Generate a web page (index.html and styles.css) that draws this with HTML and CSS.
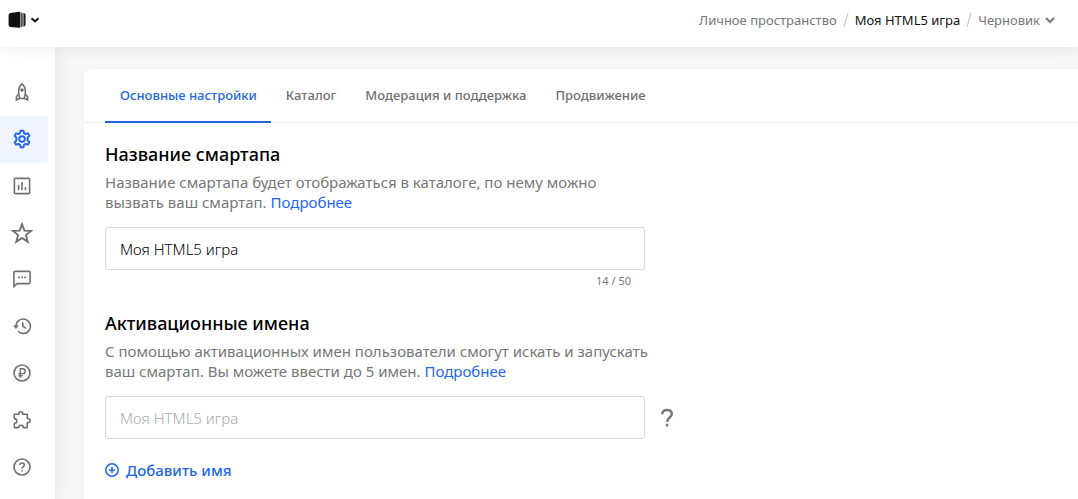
FILE: index.html
```html
<!DOCTYPE html>
<html lang="ru">
<head>
<meta charset="utf-8">
<meta name="viewport" content="width=device-width, initial-scale=1">
<title>Моя HTML5 игра</title>
<link rel="stylesheet" href="styles.css">
</head>
<body>
<header class="topbar">
  <button class="brand" type="button" aria-label="Меню продуктов">
    <svg class="brand-logo" viewBox="0 0 18 18"><path d="M.6 4.200Q.6 2.500 2.300 2.100L11 .7Q12.400.5 12.400 2V15.500Q12.400 17 11 16.800L2.300 15.900Q.6 15.600.6 14Z" fill="#111"/><path d="M12.900 1.200Q14.800 1.300 14.800 3V14.500Q14.800 16.200 12.900 16.400Z" fill="#555"/><path d="M15.400 1.800Q17.600 2.200 17.600 4V13.500Q17.600 15.200 15.400 15.800Z" fill="#222"/></svg>
    <svg class="chevron" viewBox="0 0 10 10"><path d="M1.500 3.200 5 6.400 8.500 3.200"/></svg>
  </button>
  <nav class="crumbs" aria-label="Навигация">
    <a href="#">Личное пространство</a>
    <svg class="slash" viewBox="0 0 6 16"><path d="M5 1 1 15"/></svg>
    <a class="crumb-current" href="#">Моя HTML5 игра</a>
    <svg class="slash" viewBox="0 0 6 16"><path d="M5 1 1 15"/></svg>
    <button class="crumb-menu" type="button">Черновик
      <svg class="chevron" viewBox="0 0 10 10"><path d="M1 3 5 7 9 3"/></svg>
    </button>
  </nav>
</header>
<div class="shell">
  <nav class="sidebar" aria-label="Разделы">
    <a href="#" aria-label="Запуск"><svg viewBox="0 0 20 20"><path d="M10 1.800C7.600 3.800 6.600 6.300 6.600 9.500c0 2.800.5 5.100 1.300 7h4.200c.8-1.900 1.300-4.200 1.300-7 0-3.200-1-5.700-3.400-7.700Z"/><path d="M6.700 12 4.400 14.800V18l3.300-1.700M13.300 12l2.300 2.800V18l-3.300-1.700"/><circle cx="10" cy="8" r="1" fill="currentColor"/></svg></a>
    <a class="active" href="#" aria-label="Настройки" aria-current="page"><svg viewBox="0 0 20 20"><path stroke-width="1.900" stroke-linejoin="round" d="M8.500 1.800h3l.5 2.400 1.600.9 2.300-.8 1.500 2.600-1.800 1.600v3l1.800 1.600-1.500 2.600-2.300-.8-1.600.9-.5 2.400h-3L8 15.800l-1.600-.9-2.300.8-1.500-2.600 1.800-1.600v-3L2.600 6.900l1.500-2.600 2.300.8L8 4.200Z"/><circle cx="10" cy="10" r="2.800" stroke-width="1.900"/></svg></a>
    <a href="#" aria-label="Аналитика"><svg viewBox="0 0 20 20"><rect x="2.400" y="2.400" width="15.200" height="15.200" rx="1.200"/><path d="M6.600 8.800v5.400M10 6v8.200M13.400 11.200v3"/></svg></a>
    <a href="#" aria-label="Оценки"><svg class="star" viewBox="0 0 22 22"><path stroke-width="1.900" d="m11 2.200 2.400 6.400 6.700.3-5.200 4.200 1.800 6.700-5.700-3.800-5.700 3.800 1.800-6.700L1.900 8.900l6.700-.3Z"/></svg></a>
    <a href="#" aria-label="Сообщения"><svg viewBox="0 0 20 20"><path d="M1.900 17.500V3.400q0-1 1-1h14.200q1 0 1 1v10.200q0 1-1 1H5Z"/><path stroke-width="1.800" d="M5.900 8.400h1.800M9.100 8.400h1.800M12.300 8.400h1.800"/></svg></a>
    <a href="#" aria-label="История"><svg viewBox="0 0 20 20"><path d="M4 10a7.200 7.200 0 1 1 2 5.200"/><path d="M10.800 6.200v4.200l3.200 2"/><path d="M1 9.500h6L4 13Z" fill="currentColor" stroke="none"/></svg></a>
    <a href="#" aria-label="Монетизация"><svg viewBox="0 0 20 20"><circle cx="10" cy="10" r="8"/><path stroke-width="1.400" d="M8.300 14.800V5.800h2.500a2.400 2.400 0 0 1 0 4.800H6.300M6.300 12.700h4.500"/></svg></a>
    <a href="#" aria-label="Расширения"><svg viewBox="0 0 20 20"><path stroke-linejoin="round" d="M2.300 4.300h4.500C6.500 2.400 7.400 1.700 8.800 1.700s2.300.7 2 2.600h4.500v4.300c1.900-.2 2.900.6 2.900 2s-1 2.200-2.900 2v5h-3.900c0-1.500-.9-2.400-2.400-2.400s-2.400.9-2.400 2.400H2.300v-4c1.600 0 2.500-1 2.500-2.500S3.900 8.600 2.300 8.600Z"/></svg></a>
    <a href="#" aria-label="Помощь"><svg viewBox="0 0 20 20"><circle cx="10" cy="10" r="8"/><path stroke-width="1.500" d="M7.700 8.200c0-1.400 1-2.300 2.300-2.300s2.300.8 2.300 2c0 1.700-2.300 1.900-2.300 3.800M10 13v1.600"/></svg></a>
  </nav>
  <main class="panel">
    <nav class="tabs" aria-label="Настройки смартапа">
      <a class="tab tab-active" href="#" aria-current="page">Основные настройки</a>
      <a class="tab" href="#">Каталог</a>
      <a class="tab" href="#">Модерация и поддержка</a>
      <a class="tab" href="#">Продвижение</a>
    </nav>
    <form class="settings">
      <section class="field">
        <h2><label for="app-name">Название смартапа</label></h2>
        <p>Название смартапа будет отображаться в каталоге, по нему можно<br>вызвать ваш смартап. <a href="#">Подробнее</a></p>
        <div class="input-row"><input id="app-name" type="text" value="Моя HTML5 игра"></div>
        <div class="counter">14 / 50</div>
      </section>
      <section class="field">
        <h2><label for="activation-name">Активационные имена</label></h2>
        <p>С помощью активационных имен пользователи смогут искать и запускать<br>ваш смартап. Вы можете ввести до 5 имен. <a href="#">Подробнее</a></p>
        <div class="input-row">
          <input id="activation-name" type="text" placeholder="Моя HTML5 игра">
          <button class="hint" type="button" aria-label="Подсказка"><svg viewBox="0 0 14 20"><path d="M2.200 6.200C2.200 3.500 4.100 2 7 2s4.800 1.600 4.800 4c0 3.500-4.700 3.800-4.700 7.800M7.100 15.800v2.700"/></svg></button>
        </div>
        <button class="add" type="button"><svg viewBox="0 0 14 14"><circle cx="7" cy="7" r="6.200"/><path d="M7 4v6M4 7h6"/></svg>Добавить имя</button>
      </section>
    </form>
  </main>
</div>
</body>
</html>
```
FILE: styles.css
```css
* { box-sizing: border-box; }
body {
  margin: 0;
  min-height: 100vh;
  display: flex;
  flex-direction: column;
  background: #f6f6f6;
  color: #111;
  font: 15px/20px "Noto Sans", sans-serif;
}
a { color: inherit; text-decoration: none; }
button { padding: 0; border: 0; background: none; color: inherit; font: inherit; cursor: pointer; }
svg { display: block; flex: none; fill: none; stroke: currentColor; }

.topbar {
  position: relative;
  z-index: 1;
  display: flex;
  justify-content: space-between;
  height: 47px;
  padding: 0 23px 0 8px;
  background: #fff;
  box-shadow: 0 1px 16px rgba(0, 0, 0, .07);
}
.brand { display: flex; align-items: center; gap: 4px; height: 40px; }
.brand-logo { width: 18px; height: 18px; stroke: none; }
.chevron { width: 10px; height: 10px; stroke-width: 2; }
.crumbs { display: flex; align-items: center; gap: 6px; height: 40px; font-size: 13px; color: #777; }
.crumb-current { color: #111; }
.crumb-menu { display: flex; align-items: center; gap: 5px; }
.slash { width: 6px; height: 16px; stroke: #d0d0d0; stroke-width: 1.300; }

.shell { flex: 1; display: flex; }
.sidebar {
  flex: none;
  width: 55px;
  height: 452px;
  padding: 22px 7px 9px 0;
  display: grid;
  grid-auto-rows: 1fr;
  background: #fff;
  box-shadow: 1px 0 16px rgba(0, 0, 0, .07);
  color: #707070;
}
.sidebar a { display: flex; align-items: center; padding-left: 12px; border-radius: 0 4px 4px 0; }
.sidebar svg { width: 20px; height: 20px; stroke-width: 1.600; }
.sidebar .star { width: 22px; height: 22px; margin-left: -1px; }
.sidebar .active { background: #f0f5ff; color: #2266f5; }

.panel {
  flex: 1;
  margin: 22px 0 0 29px;
  border-radius: 8px 0 0 0;
  background: #fff;
}
.tabs { display: flex; height: 54px; padding-left: 21px; border-bottom: 1px solid #eee; }
.tab { height: 54px; padding: 16px 14px 0 15px; font-size: 13px; font-weight: 500; color: #707070; }
.tab-active { border-bottom: 2px solid #2266e5; color: #2266e5; }

.settings { display: grid; gap: 22px; padding: 19px 21px; }
.field h2 { margin: 0 0 6px; font-size: 18px; line-height: 24px; font-weight: 500; color: #000; }
.field p { margin: 0; color: #777; }
.field p a { color: #2266f5; }
.input-row { display: flex; align-items: center; gap: 15px; margin-top: 15px; }
input {
  width: 100%;
  max-width: 540px;
  height: 43px;
  padding: 0 14px;
  border: 1px solid #d8d8d8;
  border-radius: 3px;
  background: #fff;
  color: #000;
  font: inherit;
  font-weight: 300;
}
input::placeholder { color: #aaa; opacity: 1; }
.hint { color: #777; }
.hint svg { width: 14px; height: 20px; stroke-width: 2.500; }
.counter { max-width: 540px; padding: 3px 14px 0 0; font-size: 11px; line-height: 16px; text-align: right; color: #777; }
.add { display: flex; align-items: center; gap: 7px; margin-top: 21px; color: #2266e5; font-weight: 500; }
.add svg { width: 14px; height: 14px; stroke-width: 1.500; }
```
